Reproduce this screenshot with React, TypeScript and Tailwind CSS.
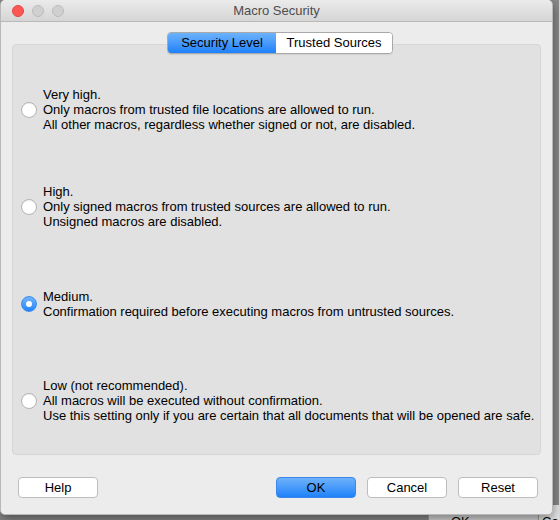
import { useState } from 'react'

const levels = [
  {
    id: 'veryhigh',
    lines: [
      'Very high.',
      'Only macros from trusted file locations are allowed to run.',
      'All other macros, regardless whether signed or not, are disabled.',
    ],
  },
  {
    id: 'high',
    lines: [
      'High.',
      'Only signed macros from trusted sources are allowed to run.',
      'Unsigned macros are disabled.',
    ],
  },
  {
    id: 'medium',
    lines: ['Medium.', 'Confirmation required before executing macros from untrusted sources.'],
  },
  {
    id: 'low',
    lines: [
      'Low (not recommended).',
      'All macros will be executed without confirmation.',
      'Use this setting only if you are certain that all documents that will be opened are safe.',
    ],
  },
]

const Radio = ({ checked }: { checked: boolean }) =>
  checked ? (
    <span className="w-[16px] h-[16px] rounded-full bg-gradient-to-b from-[#6fb4fb] to-[#1f84fb] border border-[#3d8ef0] flex items-center justify-center shrink-0">
      <span className="w-[6px] h-[6px] rounded-full bg-white" />
    </span>
  ) : (
    <span className="w-[16px] h-[16px] rounded-full bg-white border border-[#b3b3b3] shadow-[inset_0_1px_0_rgba(0,0,0,0.05)] shrink-0" />
  )

const btn =
  'w-[80px] h-[21px] rounded-[4px] border text-[13px] leading-none flex items-center justify-center text-black'

export default function App() {
  const [level, setLevel] = useState('medium')

  return (
    <div
      className="relative w-[559px] h-[520px] overflow-hidden bg-[#8a8a8a]"
      style={{ fontFamily: '"Liberation Sans", Arial, sans-serif' }}
    >
      {/* desktop behind the dialog */}
      <div className="absolute left-[428px] top-[505px] w-[110px] h-[20px] bg-[#d9d9d9] border-l border-[#a0a0a0]">
        <span className="absolute left-[22px] top-[7px] text-[13px] text-black">OK</span>
      </div>
      <div className="absolute left-[538px] top-[505px] w-[30px] h-[20px] bg-[#e6e6e6] border-l border-[#a0a0a0]">
        <span className="absolute left-[3px] top-[7px] text-[13px] text-black">Can</span>
      </div>

      {/* dialog window */}
      <div className="absolute left-0 top-0 w-[553px] h-[515px] bg-[#ececec] rounded-[5px] border-l border-r border-b border-[#b8b8b8] shadow-[0_4px_12px_rgba(0,0,0,0.45)] flex flex-col">
        {/* title bar */}
        <div className="relative h-[22px] shrink-0 rounded-t-[5px] bg-gradient-to-b from-[#ebebeb] to-[#d5d5d5] border-b border-[#b9b9b9] flex items-center justify-center">
          <div className="absolute left-[11px] top-[5px] flex gap-[8px]">
            <span className="w-[12px] h-[12px] rounded-full bg-[#fc5753] border border-[#df4744]" />
            <span className="w-[12px] h-[12px] rounded-full bg-[#d0d0d0] border border-[#bcbcbc]" />
            <span className="w-[12px] h-[12px] rounded-full bg-[#d0d0d0] border border-[#bcbcbc]" />
          </div>
          <span className="text-[13px] text-[#4d4d4d]">Macro Security</span>
        </div>

        {/* tabs + group box */}
        <div className="relative px-[11px] pt-[22px]">
          <div className="absolute left-[166px] top-[10px] z-10 flex h-[22px] rounded-[4px] border border-[#a9a9a9] overflow-hidden text-[13px] shadow-[0_1px_1px_rgba(0,0,0,0.08)]">
            <div className="w-[108px] bg-gradient-to-b from-[#6cb2fb] to-[#1b81fa] flex items-center justify-center text-black">
              Security Level
            </div>
            <div className="w-[116px] bg-white flex items-center justify-center text-black">
              Trusted Sources
            </div>
          </div>

          <div className="h-[411px] rounded-[4px] bg-[#e1e1e1] border border-[#d6d6d6] pt-[16px] pl-[8px] flex flex-col">
            {levels.map((l) => (
              <div
                key={l.id}
                className="h-[97px] flex items-center gap-[6px] cursor-default"
                onClick={() => setLevel(l.id)}
              >
                <Radio checked={level === l.id} />
                <div className="text-[13px] leading-[15px] text-black">
                  {l.lines.map((t) => (
                    <div key={t}>{t}</div>
                  ))}
                </div>
              </div>
            ))}
          </div>
        </div>

        {/* buttons */}
        <div className="flex items-center pl-[17px] pr-[14px] mt-[22px]">
          <button className={`${btn} bg-white border-[#bdbdbd]`}>Help</button>
          <div className="flex-1" />
          <div className="flex gap-[11px]">
            <button className={`${btn} bg-gradient-to-b from-[#6cb2fb] to-[#1b81fa] border-[#3b86e8]`}>OK</button>
            <button className={`${btn} bg-white border-[#bdbdbd]`}>Cancel</button>
            <button className={`${btn} bg-white border-[#bdbdbd]`}>Reset</button>
          </div>
        </div>
      </div>
    </div>
  )
}
